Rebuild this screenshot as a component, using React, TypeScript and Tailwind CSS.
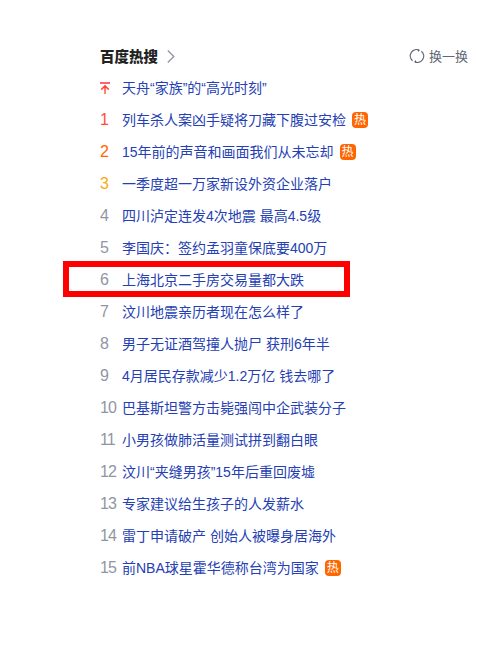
import clsx from 'clsx';

interface HotItem {
  title: string;
  hot?: boolean;
}

const ITEMS: HotItem[] = [
  { title: '天舟“家族”的“高光时刻”' },
  { title: '列车杀人案凶手疑将刀藏下腹过安检', hot: true },
  { title: '15年前的声音和画面我们从未忘却', hot: true },
  { title: '一季度超一万家新设外资企业落户' },
  { title: '四川泸定连发4次地震 最高4.5级' },
  { title: '李国庆：签约孟羽童保底要400万' },
  { title: '上海北京二手房交易量都大跌' },
  { title: '汶川地震亲历者现在怎么样了' },
  { title: '男子无证酒驾撞人抛尸 获刑6年半' },
  { title: '4月居民存款减少1.2万亿 钱去哪了' },
  { title: '巴基斯坦警方击毙强闯中企武装分子' },
  { title: '小男孩做肺活量测试拼到翻白眼' },
  { title: '汶川“夹缝男孩”15年后重回废墟' },
  { title: '专家建议给生孩子的人发薪水' },
  { title: '雷丁申请破产 创始人被曝身居海外' },
  { title: '前NBA球星霍华德称台湾为国家', hot: true },
];

const HIGHLIGHTED = 6;

const RANK_COLORS = ['text-[#ff3b3b]', 'text-[#ff4d3a]', 'text-[#ff6600]', 'text-[#faa90e]'];

const ChevronIcon = () => (
  <svg viewBox="0 0 8 14" className="ml-[9px] h-3.5 w-2" fill="none" stroke="#9195a3" strokeWidth="1.3">
    <path d="M0.8 1.5 6.8 7.5 0.8 13.5" />
  </svg>
);

const RefreshIcon = () => (
  <svg viewBox="0 0 16 16" className="mr-1 h-4 w-4" fill="none" stroke="#626675" strokeWidth="1.3">
    <path d="M3.6 12.7A6.3 6.3 0 0 1 10.2 2.1" />
    <path d="M12.4 3.3A6.3 6.3 0 0 1 5.8 13.9" />
    <path d="M8.3 1 10.8 2.3 9.4 4zM7.7 15 5.2 13.7 6.6 12z" fill="#626675" stroke="none" />
  </svg>
);

const TopIcon = () => (
  <svg viewBox="0 0 10 12" className="h-3 w-2.5" fill="none" stroke="url(#top-fill)" strokeWidth="1.5">
    <defs>
      <linearGradient id="top-fill" gradientUnits="userSpaceOnUse" x1="0" y1="0" x2="0" y2="12">
        <stop stopColor="#fe2d46" />
        <stop offset="1" stopColor="#ff6a2b" />
      </linearGradient>
    </defs>
    <path d="M0 1h10M5 12V4M1.2 7.6 5 3.9l3.8 3.7" />
  </svg>
);

const HotRow = ({ item, rank }: { item: HotItem; rank: number }) => (
  <li className="relative flex h-8 items-center">
    <span className={clsx('w-[22px] text-[16px] leading-8 tracking-[-1px]', RANK_COLORS[rank] ?? 'text-[#9195a3]')}>
      {rank === 0 ? <TopIcon /> : rank}
    </span>
    <a className="text-[14px] leading-8 whitespace-nowrap text-[#2440b3]">{item.title}</a>
    {item.hot && (
      <span className="ml-1.5 h-4 w-4 rounded bg-[#ff6600] text-center text-[12px] leading-4 text-white">
        热
      </span>
    )}
    {rank === HIGHLIGHTED && (
      <div className="absolute -top-[3px] -left-[37px] h-9 w-[287px] border-6 border-[#ff0000]" />
    )}
  </li>
);

export default function App() {
  return (
    <main className="h-[645px] w-[496px] overflow-hidden bg-white pt-10 pr-7 pl-[100px] font-['Liberation_Sans','Noto_Sans_CJK_SC',sans-serif]">
      <header className="flex h-8 items-center justify-between">
        <div className="flex items-center">
          <h2 className="pt-0.5 text-[14.5px] leading-8 font-black text-[#222222]">百度热搜</h2>
          <ChevronIcon />
        </div>
        <button type="button" className="flex items-center text-[13px] leading-8 text-[#626675]">
          <RefreshIcon />
          <span className="pt-0.5">换一换</span>
        </button>
      </header>
      <ul>
        {ITEMS.map((item, rank) => (
          <HotRow key={item.title} item={item} rank={rank} />
        ))}
      </ul>
    </main>
  );
}
